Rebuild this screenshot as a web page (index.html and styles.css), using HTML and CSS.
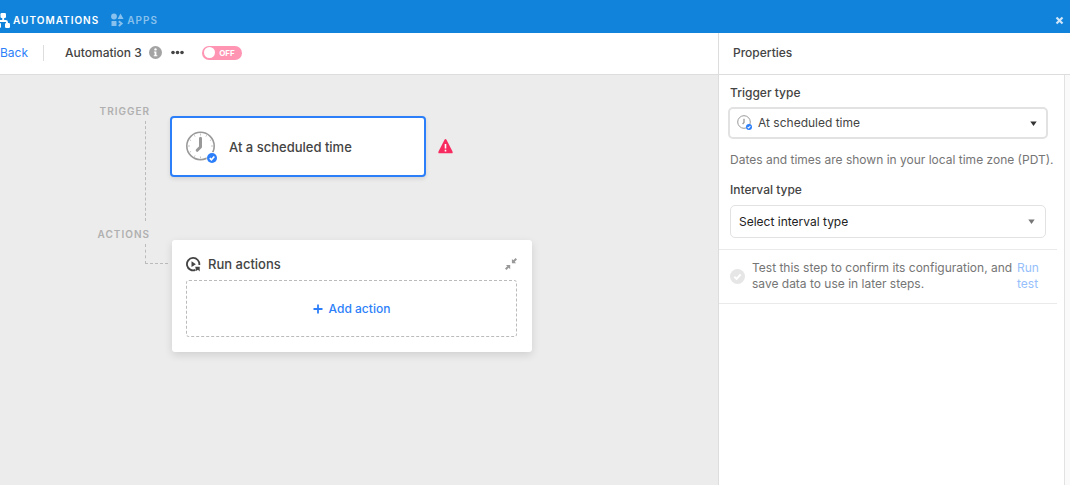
FILE: index.html
```html
<!DOCTYPE html>
<html lang="en">
<head>
<meta charset="utf-8">
<meta name="viewport" content="width=device-width, initial-scale=1">
<title>Automations</title>
<link rel="stylesheet" href="styles.css">
</head>
<body>
<svg class="defs" aria-hidden="true">
  <symbol id="badge-check" viewBox="0 0 10 10">
    <circle cx="5" cy="5" r="5" fill="#2d7ff9"/>
    <path d="M2.800 5.200 4.400 6.700 7.300 3.500" fill="none" stroke="#fff" stroke-width="1.700"/>
  </symbol>
</svg>
<header class="topbar">
  <nav class="tabs">
    <button class="tab tab-active" type="button">
      <svg width="14" height="15" viewBox="0 0 14 15" fill="currentColor" aria-hidden="true">
        <rect x="4.500" y="0" width="5.500" height="5" rx="1.200"/>
        <rect x="0" y="10" width="5" height="5" rx="1.200"/>
        <rect x="9" y="10" width="5" height="5" rx="1.200"/>
        <path d="M7.200 4v4M3 11V9.300Q3 8 4.300 8h5.400Q11 8 11 9.300V11" fill="none" stroke="currentColor" stroke-width="1.900"/>
      </svg>
      <span>AUTOMATIONS</span>
    </button>
    <button class="tab" type="button">
      <svg width="13" height="14" viewBox="0 0 13 14" fill="currentColor" aria-hidden="true">
        <circle cx="3" cy="3.500" r="2.900"/>
        <path d="M9.500.5 12.600 6H6.600z"/>
        <rect x="0.500" y="8" width="5" height="5" rx=".6"/>
        <path d="M7.800 8.200 10.600 10.600 7.800 13" fill="none" stroke="currentColor" stroke-width="2"/>
      </svg>
      <span>APPS</span>
    </button>
  </nav>
  <button class="close" type="button" aria-label="Close">
    <svg width="9" height="9" viewBox="0 0 9 9" aria-hidden="true"><path d="M1.500 1.500l6 6M7.500 1.500l-6 6" stroke="currentColor" stroke-width="2.200"/></svg>
  </button>
</header>
<div class="workspace">
  <main class="editor">
    <div class="toolbar">
      <a class="back" href="#">Back</a>
      <h1 class="title">Automation 3</h1>
      <button class="icon-button info" type="button" aria-label="Information">
        <svg width="13" height="13" viewBox="0 0 13 13" aria-hidden="true"><circle cx="6.500" cy="6.500" r="6.500" fill="#a3a3a3"/><circle cx="6.500" cy="3.400" r="1.200" fill="#fff"/><path d="M4.900 5.500h2.500v3.700h.9v1.100H4.700V9.200h.9V6.600h-.7z" fill="#fff"/></svg>
      </button>
      <button class="icon-button more" type="button" aria-label="More options">
        <svg width="13" height="5" viewBox="0 0 13 5" fill="#444" aria-hidden="true"><circle cx="2" cy="2.500" r="1.800"/><circle cx="6.500" cy="2.500" r="1.800"/><circle cx="11" cy="2.500" r="1.800"/></svg>
      </button>
      <button class="switch" type="button" role="switch" aria-checked="false" aria-label="Automation enabled">
        <span class="knob"></span><span>OFF</span>
      </button>
    </div>
    <div class="canvas">
      <section class="step">
        <div class="rail">
          <h2 class="rail-label">TRIGGER</h2>
          <div class="line"></div>
        </div>
        <div class="trigger-row">
          <button class="trigger-card" type="button">
            <svg width="32" height="32" viewBox="0 0 32 32" aria-hidden="true">
              <circle cx="14.500" cy="15" r="13.700" fill="#fff" stroke="#999" stroke-width="1.600"/>
              <path d="M14.500 2.500v2M14.500 25.500v2M2 15h2M25 15h2M8.300 4.200l.8 1.400M20.700 4.200l-.8 1.400M3.700 8.800l1.400.8M25.300 8.800l-1.400.8M3.700 21.200l1.400-.8M8.300 25.800l.8-1.400" stroke="#c4c4c4" stroke-width="1"/>
              <path d="M14.500 7.300v8.700l-3.300 3.300" fill="none" stroke="#999" stroke-width="3" stroke-linecap="round" stroke-linejoin="round"/>
              <circle cx="26" cy="26.500" r="5.500" fill="#fff"/>
              <use href="#badge-check" x="21" y="22" width="10" height="10"/>
            </svg>
            <span>At a scheduled time</span>
          </button>
          <svg class="warning" width="15" height="15" viewBox="0 0 15 15" role="img" aria-label="Configuration needed"><path d="M6.500.8q1-1.400 2 0l6 11.700q.7 1.800-1 1.800H1.500q-1.700 0-1-1.800z" fill="#f82b60"/><path d="M6.700 5h1.600v4.500H6.700zM6.700 10.800h1.600v1.600H6.700z" fill="#fff"/></svg>
        </div>
      </section>
      <section class="step">
        <div class="rail">
          <h2 class="rail-label">ACTIONS</h2>
          <div class="line line-elbow"></div>
        </div>
        <div class="actions-card">
          <div class="actions-head">
            <svg width="15" height="15" viewBox="0 0 15 15" aria-hidden="true"><path d="M13.300 8A6.200 6.200 0 1 0 9.500 12.900" fill="none" stroke="#444" stroke-width="1.800"/><path d="M5.500 4.300 9.900 7.200 5.500 10z" fill="#444"/><path d="M9.200 9.700h4.500v4.700l-1.700-1.600-1.800 1.200z" fill="#444"/></svg>
            <h3>Run actions</h3>
            <button class="icon-button" type="button" aria-label="Collapse">
              <svg width="12" height="12" viewBox="0 0 12 12" fill="#999" aria-hidden="true"><path d="M6.900 5.200V.9L8.300 2.300 10.600 0 12 1.400 9.700 3.700 11.100 5.200zM5.200 6.900v4.300L3.700 9.700 1.400 12 0 10.600 2.300 8.300.9 6.900z"/></svg>
            </button>
          </div>
          <button class="add-action" type="button">
            <svg width="10" height="10" viewBox="0 0 10 10" aria-hidden="true"><path d="M5 .5v9M.5 5h9" stroke="currentColor" stroke-width="1.800"/></svg>
            <span>Add action</span>
          </button>
        </div>
      </section>
    </div>
  </main>
  <aside class="properties">
    <h2 class="properties-title">Properties</h2>
    <div class="properties-scroll">
      <div class="properties-body">
        <div class="field">
          <label for="trigger-type">Trigger type</label>
          <div class="select select-focused">
            <svg class="select-icon" width="16" height="16" viewBox="0 0 16 16" aria-hidden="true">
              <circle cx="7" cy="7" r="6.300" fill="#fff" stroke="#999" stroke-width="1"/>
              <path d="M7 3.800v3.700L5.600 9" fill="none" stroke="#999" stroke-width="1.300"/>
              <use href="#badge-check" x="9" y="9" width="6" height="6"/>
            </svg>
            <select id="trigger-type"><option>At scheduled time</option></select>
            <svg class="caret" width="7" height="5" viewBox="0 0 7 5" aria-hidden="true"><path d="M.3.500h6.400L3.500 5z" fill="#333"/></svg>
          </div>
          <p class="hint">Dates and times are shown in your local time zone (PDT).</p>
        </div>
        <div class="field">
          <label for="interval-type">Interval type</label>
          <div class="select">
            <select id="interval-type"><option>Select interval type</option></select>
            <svg class="caret" width="7" height="5" viewBox="0 0 7 5" aria-hidden="true"><path d="M.3.500h6.400L3.500 5z" fill="#777"/></svg>
          </div>
        </div>
        <div class="test">
          <svg width="15" height="15" viewBox="0 0 15 15" aria-hidden="true"><circle cx="7.500" cy="7.500" r="7.500" fill="#e6e6e6"/><path d="M4.300 7.800 6.600 9.900 10.700 5.300" fill="none" stroke="#fff" stroke-width="2"/></svg>
          <p>Test this step to confirm its configuration, and save data to use in later steps.</p>
          <button type="button">Run test</button>
        </div>
      </div>
    </div>
  </aside>
</div>
</body>
</html>
```
FILE: styles.css
```css
* { box-sizing: border-box; }
body {
  margin: 0;
  min-height: 100vh;
  display: flex;
  flex-direction: column;
  font-family: Inter, "Liberation Sans", sans-serif;
  font-size: 12px;
  line-height: 16px;
  color: #444;
  background: #fff;
}
h1, h2, h3, p { margin: 0; font-size: inherit; }
button, select { font: inherit; color: inherit; }
button { border: 0; padding: 0; background: none; cursor: pointer; }
svg { display: block; flex: none; }
.defs { position: absolute; width: 0; height: 0; }

.topbar {
  height: 33px;
  padding: 7px 6px 0 0;
  display: flex;
  align-items: center;
  justify-content: space-between;
  background: #1283da;
  color: #fff;
}
.tabs { display: flex; gap: 12px; margin-left: -4px; }
.tab {
  display: flex;
  align-items: center;
  gap: 3px;
  font-size: 10px;
  font-weight: 600;
  letter-spacing: 1px;
  color: #88c1ed;
}
.tab-active { color: #fff; }
.close { color: #d0e6f8; }

.workspace { flex: 1; display: grid; grid-template-columns: 1fr 352px; }
.editor { display: flex; flex-direction: column; min-width: 0; }
.toolbar {
  height: 42px;
  padding-bottom: 2px;
  display: flex;
  align-items: center;
  border-bottom: 1px solid #ddd;
}
.back {
  padding-right: 15px;
  border-right: 1px solid #ddd;
  color: #2d7ff9;
  text-decoration: none;
}
.title { margin-left: 21px; font-weight: 500; }
.info { margin-left: 7px; }
.more { margin-left: 9px; }
.switch {
  margin-left: 18px;
  width: 40px;
  height: 14px;
  padding: 0 7px 0 2px;
  border-radius: 7px;
  display: flex;
  align-items: center;
  justify-content: space-between;
  background: #ff94b3;
  color: #fff;
  font-size: 8px;
  font-weight: 700;
}
.knob { width: 11px; height: 11px; border-radius: 50%; background: #fff; }

.canvas { flex: 1; padding: 28px 0 32px; background: #ececec; }
.step { display: grid; grid-template-columns: 170px 1fr; }
.rail { display: flex; flex-direction: column; }
.rail-label {
  width: 150px;
  text-align: right;
  font-size: 10px;
  font-weight: 600;
  letter-spacing: 1px;
  color: #b0b0b0;
}
.line {
  flex: 1;
  width: 23px;
  margin: 2px 0 5px 145px;
  border-left: 1px dashed #bbb;
}
.line-elbow { flex: none; height: 20px; border-bottom: 1px dashed #bbb; }
.trigger-row {
  display: flex;
  align-items: center;
  gap: 12px;
  padding: 13px 0 49px;
}
.trigger-card {
  width: 256px;
  height: 61px;
  padding: 0 14px;
  display: flex;
  align-items: center;
  gap: 11px;
  border: 2px solid #2d7ff9;
  border-radius: 4px;
  background: #fff;
  box-shadow: 0 2px 4px #0000001a;
  font-size: 13px;
  font-weight: 500;
}
.actions-card {
  width: 360px;
  margin: 14px 0 0 2px;
  padding: 16px 15px 15px 14px;
  border-radius: 3px;
  background: #fff;
  box-shadow: 0 3px 8px #0000001f;
}
.actions-head { display: flex; align-items: center; margin-bottom: 8px; }
.actions-head h3 { flex: 1; margin-left: 7px; font-size: 13px; font-weight: 500; }
.add-action {
  width: 100%;
  height: 57px;
  display: flex;
  align-items: center;
  justify-content: center;
  gap: 6px;
  border: 1px dashed #bbb;
  border-radius: 3px;
  color: #2d7ff9;
  font-weight: 500;
}

.properties { display: flex; flex-direction: column; border-left: 1px solid #ddd; }
.properties-title {
  height: 42px;
  padding: 12px 14px;
  border-bottom: 1px solid #ddd;
  font-weight: 500;
}
.properties-scroll { flex: 1; padding-right: 5px; background: #fafafa; }
.properties-body {
  height: 100%;
  padding: 10px 7px 0 0;
  border-right: 1px solid #e2e2e2;
  background: #fff;
}
.field { padding: 0 11px 14px 11px; }
.field label { display: block; margin-bottom: 7px; font-weight: 500; }
.select { position: relative; }
.select select {
  display: block;
  width: 100%;
  height: 33px;
  padding: 0 24px 0 8px;
  border: 1px solid #e2e2e2;
  border-radius: 5px;
  appearance: none;
  background: #fff;
  color: #222;
}
.select-focused { margin: -1px -2px 0; }
.select-focused select { height: 32px; padding-left: 28px; border-width: 2px; color: #444; }
.select-icon { position: absolute; left: 9px; top: 8px; }
.caret { position: absolute; right: 11px; top: 14px; }
.hint { margin-top: 13px; color: #757575; white-space: nowrap; }
.test {
  margin-top: -3px;
  padding: 10px 14px 11px 11px;
  display: flex;
  align-items: center;
  border: solid #eaeaea;
  border-width: 1px 0;
  color: #757575;
}
.test p { flex: 1; margin-left: 7px; }
.test button { width: 26px; text-align: left; color: #96bffc; }
```
